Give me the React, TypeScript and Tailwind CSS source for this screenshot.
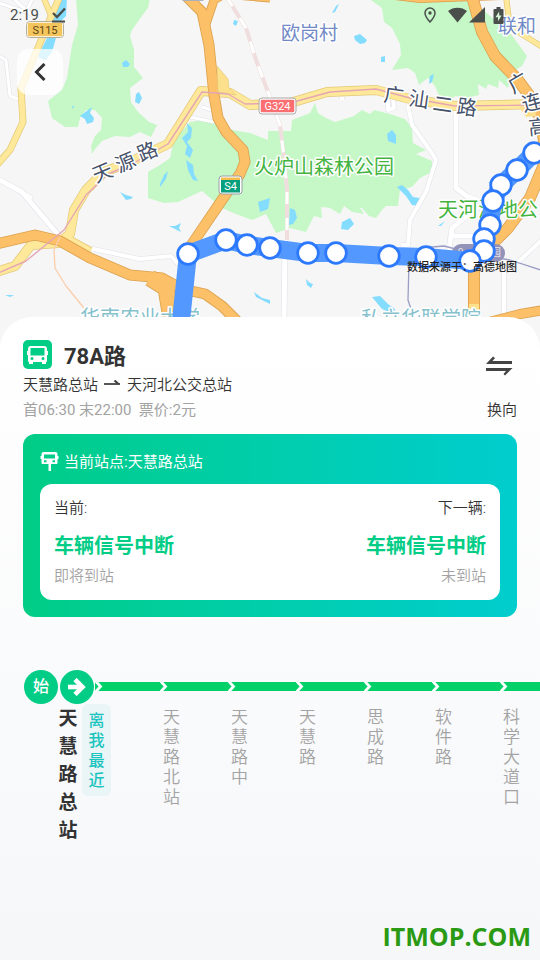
import React from "react";
import { clsx } from "clsx";

type Point = [number, number];

const stops: Point[] = [
  [534, 153], [517, 170], [501, 185], [493, 201], [490, 225], [484, 239],
  [484, 251], [470, 261], [426, 257], [389, 256], [336, 253], [308, 253],
  [270, 248], [247, 245], [226, 240], [188, 254],
];

const nextStations = ["天慧路北站", "天慧路中", "天慧路", "思成路", "软件路", "科学大道口"];

const orangeRoads = [
  { d: "M184 -6L202 12L209 45L214 95L218 118L226 132L243 150L245 162L240 174L226 194L190 247", w: 11 },
  { d: "M206 24L214 0L224 -6L270 -2", w: 9 },
  { d: "M-4 244L35 235L60 241L90 258L130 275L162 278L182 289L205 294L222 306L240 324", w: 11 },
  { d: "M150 278L166 288L172 324", w: 17 },
  { d: "M395 -4L420 -1L500 -4", w: 8 },
  { d: "M472 -4L482 32L495 56L518 80L534 102L542 124L546 160L530 198L508 228L474 262L474 312", w: 12 },
  { d: "M485 323L520 314L544 310", w: 10 },
];

const yellowRoads = [
  { d: "M60 -4L48 24L21 88L23 122L10 150L-4 166", w: 7 },
  { d: "M43 -4L52 18", w: 6 },
  { d: "M-4 272L15 266L31 245L58 243L70 234L74 210L86 190L104 172L130 162L168 144L201 91L230 93L250 105L290 103L327 92L376 90L410 99L455 106L544 104", w: 10 },
  { d: "M68 240L90 252", w: 10 },
  { d: "M506 -4L509 20L520 33L544 48", w: 6 },
];

const whiteRoads = [
  { d: "M-4 178L22 192L60 237", w: 6 },
  { d: "M22 192L32 197L28 202", w: 3 },
  { d: "M84 247L140 259L171 256L178 264", w: 5 },
  { d: "M-4 54L6 60L10 96L18 99", w: 4 },
  { d: "M-4 2L26 12L34 -4M10 -4L38 20", w: 4 },
  { d: "M190 117L214 122M202 107L212 110", w: 4 },
  { d: "M408 105L412 125L432 153L436 160L426 192L410 220L408 245L402 245", w: 5 },
  { d: "M456 110L456 188L468 197L478 200", w: 6 },
  { d: "M492 196L452 228L449 250M452 236L480 236", w: 6 },
  { d: "M342 97L342 100M388 100L388 110L394 108L393 98", w: 5 },
  { d: "M285 240L284 324", w: 6 },
  { d: "M504 262L504 324M518 262L544 238", w: 5 },
];

const lakes = [
  "M58 -2L67 -2L66 16L58 24L52 24L56 10Z",
  "M47 38L56 38L52 52L46 60L39 58L39 54Z",
  "M122 63L126 60L130 64L128 67L123 67Z",
  "M136 94L139 92L142 98L139 104L135 102Z",
  "M80 116L88 110L92 107L90 113L94 118L93 122L87 124L85 119Z",
  "M72 106L74 106L73 109Z",
  "M234 20L238 21L236 26L233 24Z",
  "M187 123L192 128L191 138L187 142L193 150L190 158L185 154L187 146L182 138L188 132Z",
  "M120 192L126 195L133 197L131 199L126 200Z",
  "M160 184L164 175L168 171L166 179L160 187Z",
  "M186 160L193 165L194 174L198 181L193 180L188 170Z",
  "M169 226L175 226L181 223L179 228L181 232L175 229Z",
  "M254 292L262 298L270 300L270 304L262 300L256 297Z",
  "M258 202L270 198L268 209L260 212Z",
  "M5 295L14 295L10 297Z",
  "M332 13L336 6L339 4L335 12Z",
  "M354 36L360 34L367 40L365 43L360 44L355 40Z",
  "M381 57L385 56L385 62L381 62Z",
  "M430 76L434 74L432 82L429 84Z",
  "M387 134L392 130L396 135L396 144L388 141Z",
  "M290 208L295 210L297 218L293 224L289 225Z",
  "M342 222L350 218L354 224L348 230L341 229Z",
  "M397 187L402 185L408 190L413 197L420 198L419 206L412 205L406 196Z",
  "M372 297L380 296L388 304L395 309L394 314L382 309Z",
  "M306 279L310 283L313 284L311 288L307 285Z",
  "M438 226L445 221L441 226Z",
  "M488 183L496 176L494 182Z",
];

const forests = [
  "M76 -2L150 -2L148 8L139 20L132 30L130 36L134 50L134 67L143 78L130 88L131 102L138 112L149 122L157 125L151 137L140 132L130 137L115 136L102 141L95 149L92 154L91 146L95 136L101 130L102 118L95 110L86 110L80 118L78 127L65 127L52 118L48 101L62 90L67 78L72 45L78 25Z",
  "M368 -2L470 -2L490 16L508 30L527 56L522 66L512 72L508 88L499 80L498 88L488 84L486 89L478 84L479 95L466 98L455 96L450 101L440 98L435 86L428 78L419 85L415 73L408 68L392 70L401 55L400 44L392 28L384 22L382 8Z",
  "M174 140L190 122L205 120L232 130L250 133L268 140L268 131L291 131L292 120L310 113L315 103L318 113L326 118L335 122L354 116L362 110L370 114L374 110L390 114L405 119L412 128L413 143L426 150L416 154L432 161L432 172L420 178L412 187L400 190L398 206L386 206L382 210L376 218L369 216L362 208L360 208L364 214L352 212L344 206L340 214L330 208L321 207L322 218L314 216L306 232L290 228L276 233L266 214L252 220L236 214L222 208L202 191L178 202L164 203L148 198L148 172L160 165L170 158Z",
];

const pinkLine =
  "M-4 274L26 261L48 243L64 230L86 195L108 174L132 164L168 144L202 92L228 94L245 104L290 103L330 92L376 89L410 98L455 106L544 105";

const railway = "M226 -4L246 28L256 60L268 92L280 125L284 158L287 190L287 240";

const busRoute = [...stops.map((p) => p.join(" ")), "180 330"].join("L");

const MapView = () => (
  <svg
    viewBox="0 0 540 350"
    preserveAspectRatio="xMidYMin slice"
    className="block w-full h-[350px] font-['Noto_Sans_CJK_SC',sans-serif]"
    role="img"
    aria-label="线路地图"
  >
    <rect width="540" height="350" fill="#f6f6f6" />
    {forests.map((d) => (
      <path key={d} d={d} fill="#c6f7c7" />
    ))}
    {lakes.map((d) => (
      <path key={d} d={d} fill="#84dcff" />
    ))}

    <g fill="none" strokeLinejoin="round">
      {whiteRoads.map(({ d, w }) => (
        <path key={d} d={d} stroke="#dfe0e8" strokeWidth={w} />
      ))}
      {whiteRoads.map(({ d, w }) => (
        <path key={d} d={d} stroke="#fff" strokeWidth={w - 1} />
      ))}
      <path d={railway} stroke="#f0dede" strokeWidth="4" />
      <path d={railway} stroke="#fff" strokeWidth="3" strokeDasharray="12 14" />
      {yellowRoads.map(({ d, w }) => (
        <path key={d} d={d} stroke="#e3c878" strokeWidth={w} />
      ))}
      {yellowRoads.map(({ d, w }) => (
        <path key={d} d={d} stroke="#fee89a" strokeWidth={w - 1.4} />
      ))}
      {orangeRoads.map(({ d, w }) => (
        <path key={d} d={d} stroke="#dba04c" strokeWidth={w} />
      ))}
      {orangeRoads.map(({ d, w }) => (
        <path key={d} d={d} stroke="#fcc069" strokeWidth={w - 1.6} />
      ))}
      <path d="M217 66L228 79L229 88L236 95L218 92Z" fill="#fde08c" stroke="#e3c878" strokeWidth="0.7" />
      <path d="M519 107L535 104L536 116L526 117Z" fill="#fde08c" />
      <path d="M474 304V324" stroke="#fde08c" strokeWidth="10" />
      <path d={pinkLine} stroke="#e5a6b4" strokeWidth="1.4" />
      <path d="M60 237L54 250L55 268L66 286L84 308" stroke="#fbcfae" strokeWidth="1.4" />
      <path d="M411 309L408 300L409 262L420 248L444 246L475 254L510 260L544 271" stroke="#9a9ec4" strokeWidth="1.3" />
    </g>
    <rect x="182" y="-6" width="22" height="7" rx="2" fill="#a9b0c0" />

    <rect x="452" y="244" width="53" height="18" rx="9" fill="#9392b9" />
    <text x="458" y="256" fontSize="10" fill="#e4e4f0">9</text>
    <text x="491" y="256" fontSize="10" fill="#e4e4f0">园</text>

    <g stroke="#fff" strokeWidth="3" strokeLinejoin="round" style={{ paintOrder: "stroke" }}>
      <g fontSize="19" fill="#7189c6">
        <text x="281" y="40">欧岗村</text>
        <text x="498" y="33">联和</text>
      </g>
      <g fontSize="20" fill="#43b440">
        <text x="254" y="174">火炉山森林公园</text>
        <text x="438" y="217">天河湿地公</text>
      </g>
      <g fontSize="20" fill="#86c1cc">
        <text x="80" y="325">华南农业大学</text>
        <text x="361" y="326">私立华联学院</text>
      </g>
      <g fontSize="20" fill="#46536b">
        <text x="96 119 141" y="183 173 162" rotate="-23">天源路</text>
        <text x="383 408 432 456" y="101 105 110 113" rotate="8">广汕二路</text>
        <text x="513 524 529" y="94 112 135" rotate="-30 -15 -5">广连高</text>
      </g>
    </g>

    <g fontFamily="Roboto, sans-serif" fontSize="11" textAnchor="middle">
      <rect x="27" y="22" width="36" height="15" rx="2" fill="#f3c55c" stroke="#fff" strokeWidth="1.5" />
      <rect x="26.5" y="21.5" width="37" height="16" rx="3" fill="none" stroke="#b5b09d" />
      <text x="45" y="33.5" fill="#5b4817">S115</text>
      <rect x="260" y="99" width="35" height="14" rx="2" fill="#fb6e72" stroke="#fff" strokeWidth="1.5" />
      <rect x="259" y="98" width="37" height="16" rx="3" fill="none" stroke="#aaa" />
      <text x="277.5" y="110" fill="#fff">G324</text>
      <rect x="219" y="176" width="23" height="18" rx="3" fill="#fff" stroke="#9aa0a8" />
      <rect x="221" y="177.5" width="19" height="2.5" fill="#f3bd50" />
      <rect x="221" y="180" width="19" height="12.5" fill="#079f7d" />
      <text x="230.5" y="190" fill="#fff">S4</text>
    </g>

    <path d={`M${busRoute}`} fill="none" stroke="#5298ff" strokeWidth="18" strokeLinejoin="round" />
    {stops.map(([x, y]) => (
      <circle key={`${x}-${y}`} cx={x} cy={y} r="10.3" fill="#fff" stroke="#2d79fd" strokeWidth="2.8" />
    ))}
    <text x="407" y="271" fontSize="11" fontWeight="500" fill="#222">数据来源于：高德地图</text>
  </svg>
);

const StatusBar = () => (
  <div className="absolute inset-x-0 top-0 flex h-[30px] items-center justify-between pl-[10px] pr-9 text-[#4b4f4c]">
    <div className="flex items-center gap-3">
      <span className="font-[Roboto] text-[15px]">2:19</span>
      <svg width="16" height="16" viewBox="0 0 16 16" fill="none" stroke="currentColor">
        <path d="M2 6L6 10L14 1.5" strokeWidth="2.4" />
        <path d="M1 14.5H14" strokeWidth="2" />
      </svg>
    </div>
    <div className="flex items-center gap-[2px]">
      <svg width="12" height="16" viewBox="0 0 12 16" className="mr-[10px]">
        <path d="M6 1A5 5 0 0 0 1 6C1 9.5 6 15 6 15S11 9.5 11 6A5 5 0 0 0 6 1Z" fill="none" stroke="currentColor" strokeWidth="1.5" />
        <circle cx="6" cy="6" r="1.7" fill="currentColor" />
      </svg>
      <svg width="19" height="16" viewBox="0 0 19 16">
        <path d="M9.5 15.5L0 4C5 -0.5 14 -0.5 19 4Z" fill="currentColor" />
      </svg>
      <svg width="16" height="16" viewBox="0 0 16 16" className="mr-[6px]">
        <path d="M16 0V15.5H0Z" fill="currentColor" />
      </svg>
      <svg width="11" height="17" viewBox="0 0 11 17">
        <path d="M3.5 0H7.5V2H9.5Q10.5 2 10.5 3V16Q10.5 17 9.5 17H1.5Q.5 17 .5 16V3Q.5 2 1.5 2H3.5Z" fill="currentColor" />
        <path d="M6.2 4.5L2.5 10.2H5V14.2L8.6 8.6H6.2Z" fill="#d8f5d8" />
      </svg>
    </div>
  </div>
);

const BusIcon = () => (
  <svg width="29" height="29" viewBox="0 0 29 29">
    <rect width="29" height="29" rx="5" fill="#02cd86" />
    <path
      fill="#fff"
      fillRule="evenodd"
      d="M8 6H21Q24 6 24 9V11H25V15H24V21Q24 22 23 22V24H19V22H10V24H6V22Q5 22 5 21V15H4V11H5V9Q5 6 8 6ZM7.5 8V15.5H21.5V8ZM9 17A1.5 1.5 0 1 0 9 20A1.5 1.5 0 1 0 9 17ZM20 17A1.5 1.5 0 1 0 20 20A1.5 1.5 0 1 0 20 17Z"
    />
  </svg>
);

const StopSignIcon = () => (
  <svg width="19" height="20" viewBox="0 0 19 20">
    <path
      fill="#fff"
      fillRule="evenodd"
      d="M3.5 0H15.5Q17.5 0 17.5 2V4H18.5V7H17.5V11Q17.5 12 16.5 12H11V19H8.5V12H2.5Q1.5 12 1.5 11V7H.5V4H1.5V2Q1.5 0 3.5 0ZM4 2.5V6.5H15V2.5ZM4 8.3V10.2H6.5V8.3ZM12.5 8.3V10.2H15V8.3Z"
    />
  </svg>
);

const Chevron = () => (
  <svg width="8" height="9" viewBox="0 0 8 9" className="block">
    <path d="M0 -1.5L5.5 4.5L0 10.5" fill="none" stroke="#fff" strokeWidth="2.8" />
  </svg>
);

interface BusProps {
  label: string;
  state: string;
  note: string;
  end?: boolean;
}

const NextBus = ({ label, state, note, end }: BusProps) => (
  <div className={clsx("flex flex-col", end && "items-end")}>
    <p className="text-[15px] leading-5 font-[350] text-[#333]">{label}</p>
    <p className="mt-3 text-xl leading-8 font-bold text-[#02cd86]">{state}</p>
    <p className="mt-[2px] text-[15px] leading-6 font-[350] text-[#a3a3a3]">{note}</p>
  </div>
);

const Timeline = () => (
  <ol className="mt-[52px] flex overflow-x-auto pl-6 [scrollbar-width:none]">
    <li className="w-[136px] shrink-0">
      <div className="flex h-[35px] items-center">
        <span className="mr-[2px] flex size-[34px] shrink-0 items-center justify-center rounded-full bg-[#02cd86] text-base font-medium text-white">
          始
        </span>
        <span className="mr-px flex size-[34px] shrink-0 items-center justify-center rounded-full bg-[#02cd86]">
          <svg width="18" height="18" viewBox="0 0 18 18" fill="none" stroke="#fff" strokeWidth="4.6">
            <path d="M0 9H13" />
            <path d="M7 1.5L14.5 9L7 16.5" />
          </svg>
        </span>
        <span className="h-[9px] flex-1 bg-[#02d068]">
          <Chevron />
        </span>
      </div>
      <div className="flex items-start pl-[34px]">
        <span className="mt-px w-5 text-center text-[19px] leading-7 font-bold text-[#333]">天慧路总站</span>
        <span className="ml-1 w-[29px] rounded-md bg-[#eaf5f7] px-[6px] pt-[7px] pb-[5px] text-center text-base leading-5 font-medium text-[#1cc4c0]">
          离我最近
        </span>
      </div>
    </li>
    {nextStations.map((name) => (
      <li key={name} className="w-[68px] shrink-0">
        <div className="flex h-[35px] items-center">
          <span className="h-[9px] flex-1 bg-[#02d068]">
            <Chevron />
          </span>
        </div>
        <span className="mt-[3px] ml-[3px] block w-[17px] text-[17px] leading-5 font-[350] text-[#a3a3a3]">{name}</span>
      </li>
    ))}
  </ol>
);

const App = () => {
  return (
    <div className="relative flex min-h-screen flex-col overflow-hidden bg-[#f6f6f6] font-[Roboto,'Noto_Sans_CJK_SC',sans-serif]">
      <MapView />
      <StatusBar />
      <button
        aria-label="返回"
        className="absolute top-[49px] left-[17px] flex size-[46px] items-center justify-center rounded-xl bg-white/75"
      >
        <svg width="12" height="18" viewBox="0 0 12 18" fill="none" stroke="#333" strokeWidth="3">
          <path d="M10.5 1L2.5 9L10.5 17" />
        </svg>
      </button>

      <main className="relative -mt-[33px] flex flex-1 flex-col rounded-t-[32px] bg-linear-to-b from-white to-[#f6f7f9] pt-[23px]">
        <header className="flex items-end justify-between px-[23px]">
          <div>
            <div className="flex items-start gap-3">
              <BusIcon />
              <h1 className="pt-px text-[22px] leading-8 font-bold text-[#333]">78A路</h1>
            </div>
            <p className="flex items-center gap-[6px] text-[15px] leading-6 font-[350] text-[#333]">
              天慧路总站
              <svg width="17" height="10" viewBox="0 0 17 10" fill="none" stroke="#444" strokeWidth="1.8">
                <path d="M0 4H16" />
                <path d="M10.5 0.5L14.5 4" strokeWidth="2.2" />
              </svg>
              天河北公交总站
            </p>
            <p className="mt-px text-[15px] leading-6 whitespace-pre text-[#a3a3a3]">首06:30 末22:00  票价:2元</p>
          </div>
          <button className="flex flex-col items-end gap-[22px] text-[15px] leading-6 font-[350] text-[#333]">
            <svg width="32" height="20" viewBox="0 0 32 20" fill="#444">
              <path d="M1 8L8 0.5L10 2L7.5 5H27V8Z" />
              <path d="M27.5 12L20 19.5L18.5 18L21 15H1V12Z" />
            </svg>
            换向
          </button>
        </header>

        <section className="mx-[23px] mt-3 rounded-xl bg-linear-to-r from-[#02cd86] to-[#02cdce] px-[17px] pt-4 pb-[17px]">
          <h2 className="flex items-center gap-[5px] text-[15px] leading-6 font-normal text-white">
            <StopSignIcon />
            当前站点:天慧路总站
          </h2>
          <div className="mt-[10px] flex justify-between rounded-xl bg-white px-[14px] pt-[14px] pb-3">
            <NextBus label="当前:" state="车辆信号中断" note="即将到站" />
            <NextBus label="下一辆:" state="车辆信号中断" note="未到站" end />
          </div>
        </section>

        <Timeline />

        <p className="mt-auto self-end pr-[9px] pb-2 font-['Open_Sans'] text-[25px] leading-8 font-bold text-[#2a9a14]">
          ITMOP.COM
        </p>
      </main>
    </div>
  );
};

export default App;
